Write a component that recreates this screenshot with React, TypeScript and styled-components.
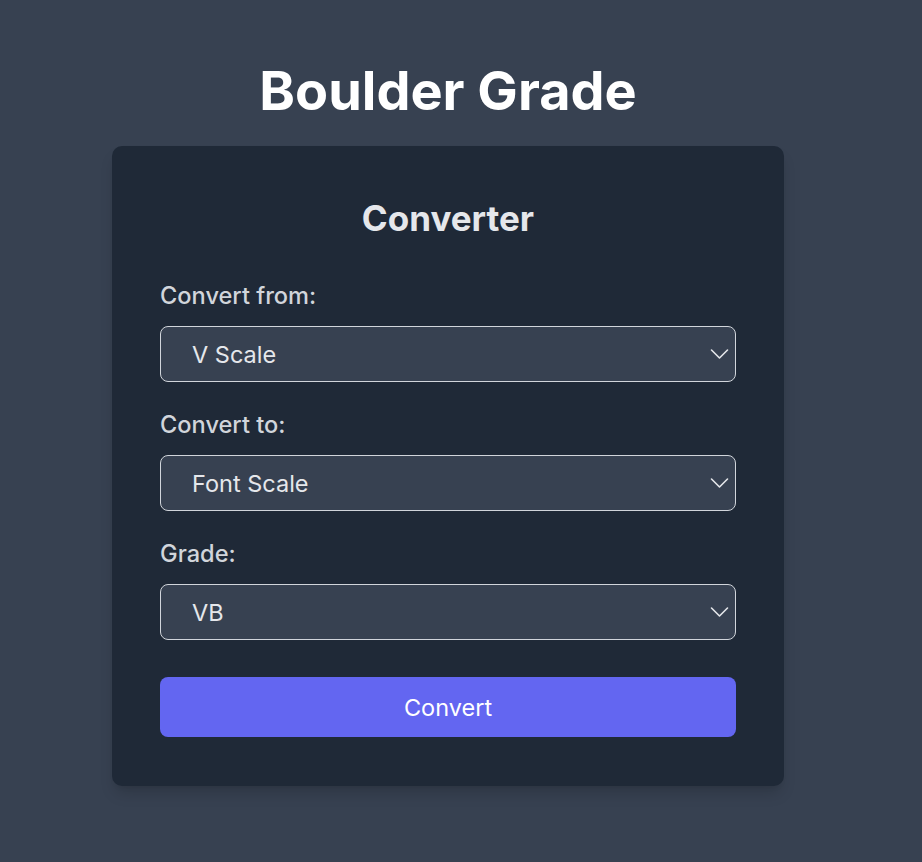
import React from "react";
import styled, { createGlobalStyle } from "styled-components";

const Global = createGlobalStyle`
  html, body { margin: 0; padding: 0; background: #374151; }
  body { font-family: Inter, "Liberation Sans", Arial, sans-serif; -webkit-font-smoothing: antialiased; }
  * { box-sizing: border-box; }
`;

const Page = styled.div`
  width: 896px;
  min-height: 862px;
  display: flex;
  flex-direction: column;
  align-items: center;
  padding-top: 62px;
`;

const Title = styled.h1`
  margin: 0 0 26px;
  font-size: 54px;
  line-height: 58px;
  font-weight: 700;
  color: #ffffff;
`;

const Card = styled.div`
  width: 672px;
  background: #1f2937;
  border-radius: 10px;
  padding: 48px 48px 49px;
  box-shadow: 0 10px 15px -3px rgba(0, 0, 0, 0.15), 0 4px 6px -4px rgba(0, 0, 0, 0.1);
  display: flex;
  flex-direction: column;
`;

const CardTitle = styled.h2`
  margin: 0 0 39px;
  text-align: center;
  font-size: 35px;
  line-height: 48px;
  font-weight: 700;
  color: #e5e7eb;
`;

const Field = styled.div`
  display: flex;
  flex-direction: column;
  gap: 15px;
  margin-bottom: 28px;
`;

const Label = styled.label`
  font-size: 23.6px;
  line-height: 30px;
  font-weight: 500;
  color: #d1d5db;
`;

const SelectWrap = styled.div`
  position: relative;
`;

const Select = styled.select`
  appearance: none;
  -webkit-appearance: none;
  width: 100%;
  height: 56px;
  padding: 0 48px 0 31px;
  background: #374151;
  border: 1px solid #d1d5db;
  border-radius: 8px;
  color: #e5e7eb;
  font-family: inherit;
  font-size: 23.5px;
  outline: none;
`;

const Chevron = styled.svg`
  position: absolute;
  right: 7px;
  top: 50%;
  transform: translateY(-50%);
  pointer-events: none;
`;

const Button = styled.button`
  margin-top: 9px;
  height: 60px;
  width: 100%;
  border: none;
  border-radius: 8px;
  background: #6366f1;
  color: #ffffff;
  font-family: inherit;
  font-size: 23.5px;
  font-weight: 400;
  cursor: pointer;
`;

const ChevronIcon = () => (
  <Chevron width="19" height="19" viewBox="0 0 19 19" fill="none">
    <path d="M1.5 5.5l8 8 8-8" stroke="#e5e7eb" strokeWidth="1.6" strokeLinecap="round" strokeLinejoin="round" />
  </Chevron>
);

const SelectField = ({ label, options, value }: { label: string; options: string[]; value: string }) => (
  <Field>
    <Label>{label}</Label>
    <SelectWrap>
      <Select defaultValue={value}>
        {options.map((o) => (
          <option key={o} value={o}>{o}</option>
        ))}
      </Select>
      <ChevronIcon />
    </SelectWrap>
  </Field>
);

export default function App() {
  return (
    <>
      <Global />
      <Page>
        <Title>Boulder Grade</Title>
        <Card>
          <CardTitle>Converter</CardTitle>
          <SelectField label="Convert from:" options={["V Scale", "Font Scale"]} value="V Scale" />
          <SelectField label="Convert to:" options={["Font Scale", "V Scale"]} value="Font Scale" />
          <SelectField label="Grade:" options={["VB", "V0", "V1", "V2", "V3"]} value="VB" />
          <Button>Convert</Button>
        </Card>
      </Page>
    </>
  );
}
